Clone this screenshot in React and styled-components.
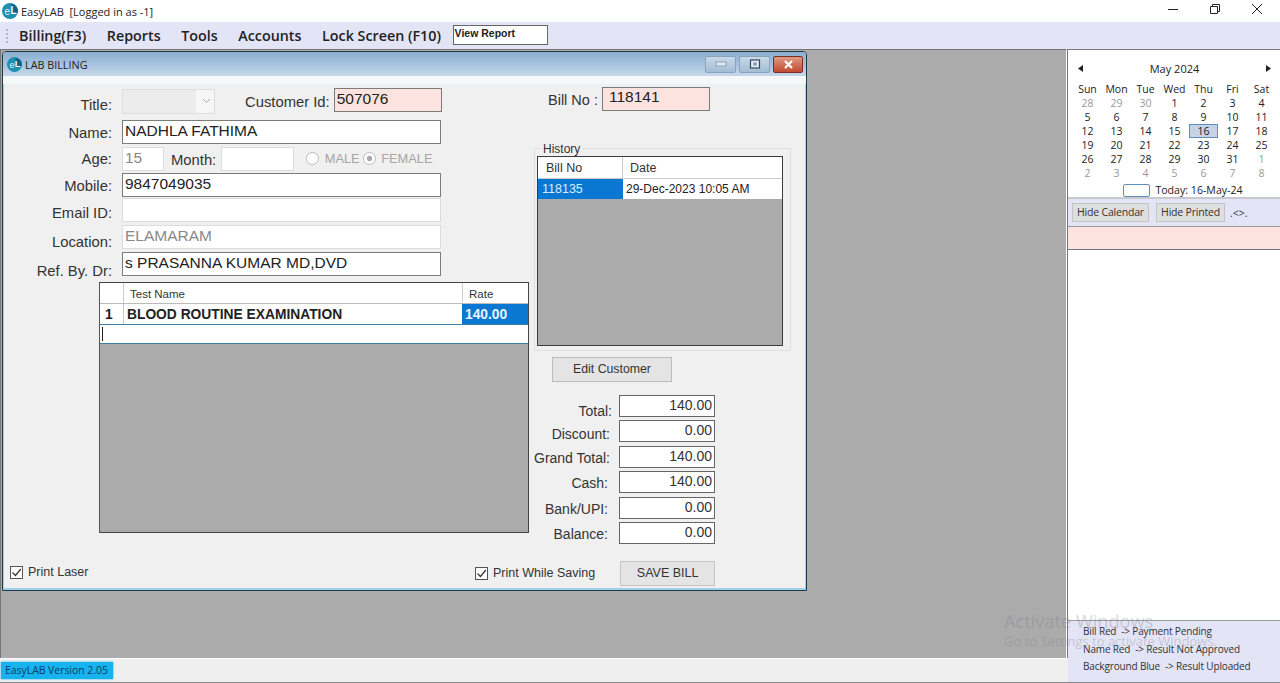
import styled, { createGlobalStyle } from "styled-components";

const GlobalStyle = createGlobalStyle`
  html, body { margin: 0; padding: 0; height: 100%; overflow: hidden; }
  body { font-family: "Liberation Sans", Arial, sans-serif; color: #222; }
  #root { height: 683px; }
`;

const calendarDays = [
  [[28, 1], [29, 1], [30, 1], [1], [2], [3], [4]],
  [[5], [6], [7], [8], [9], [10], [11]],
  [[12], [13], [14], [15], [16], [17], [18]],
  [[19], [20], [21], [22], [23], [24], [25]],
  [[26], [27], [28], [29], [30], [31], [1, 1]],
  [[2, 1], [3, 1], [4, 1], [5, 1], [6, 1], [7, 1], [8, 1]],
];

// label, value, right inset of the label, top padding of the label
const totals = [
  ["Total:", "140.00", 0, 10],
  ["Discount:", "0.00", 2, 6],
  ["Grand Total:", "140.00", 3, 2],
  ["Cash:", "140.00", 4, 2],
  ["Bank/UPI:", "0.00", 4, 2],
  ["Balance:", "0.00", 4, 3],
];

function Logo({ size }) {
  return (
    <svg width={size} height={size} viewBox="0 0 16 16">
      <circle cx="8" cy="8" r="8" fill="#1d8fb0" />
      <path d="M9 1 A7 7 0 0 1 15.5 10 L9 10 Z" fill="#0d5f86" />
      <text x="2.6" y="12" fontSize="10" fontFamily="Liberation Sans" fill="#dff3f7">e</text>
      <text x="8.4" y="10.5" fontSize="10" fontWeight="700" fontFamily="Liberation Sans" fill="#fff">L</text>
    </svg>
  );
}

function Check() {
  return (
    <CheckBox>
      <svg width="11" height="11" viewBox="0 0 11 11">
        <path d="M1.5 5.5 L4.5 8.5 L9.8 2" fill="none" stroke="#333" strokeWidth="1.2" />
      </svg>
    </CheckBox>
  );
}

export default function App() {
  return (
    <Page>
      <GlobalStyle />
      <TitleBar>
        <Logo size={16} />
        <AppTitle>EasyLAB&nbsp; [Logged in as -1]</AppTitle>
        <WinControls>
          <svg width="12" height="12" viewBox="0 0 12 12">
            <path d="M1 6.5 H11" stroke="#222" strokeWidth="1" />
          </svg>
          <svg width="12" height="12" viewBox="0 0 12 12">
            <path d="M1.5 3.5 H8.5 V10.5 H1.5 Z M3.5 3.5 V1.5 H10.5 V8.5 H8.5" fill="none" stroke="#222" strokeWidth="1" />
          </svg>
          <svg width="12" height="12" viewBox="0 0 12 12">
            <path d="M1 1 L11 11 M11 1 L1 11" stroke="#222" strokeWidth="1" />
          </svg>
        </WinControls>
      </TitleBar>

      <MenuBar>
        <Grip />
        <MenuItem>Billing(F3)</MenuItem>
        <MenuItem>Reports</MenuItem>
        <MenuItem>Tools</MenuItem>
        <MenuItem>Accounts</MenuItem>
        <MenuItem>Lock Screen (F10)</MenuItem>
        <ReportBox>View Report</ReportBox>
      </MenuBar>

      <Middle>
        <Desktop>
          <FormWindow>
            <WindowHead>
              <Logo size={15} />
              <WindowTitle>LAB BILLING</WindowTitle>
              <WindowButtons>
                <WindowButton>
                  <svg width="12" height="6" viewBox="0 0 12 6"><rect x="1" y="1" width="10" height="4" fill="#dfe7ef" stroke="#8296aa" strokeWidth="0.8" /></svg>
                </WindowButton>
                <WindowButton>
                  <svg width="12" height="10" viewBox="0 0 12 10"><rect x="1.5" y="1" width="9" height="8" fill="#e8eef5" stroke="#33495f" strokeWidth="1.2" /><rect x="4" y="3.4" width="4" height="3.2" fill="#8aa5be" /></svg>
                </WindowButton>
                <CloseButton>
                  <svg width="11" height="9" viewBox="0 0 11 9"><path d="M2 1 L9 8 M9 1 L2 8" stroke="#fff" strokeWidth="2.2" /></svg>
                </CloseButton>
              </WindowButtons>
            </WindowHead>

            <FormBody>
              <LeftColumn>
                <FieldRow $h={26} $mb={6}>
                  <Label $pt={7}>Title:</Label>
                  <ComboBox>
                    <svg width="9" height="6" viewBox="0 0 9 6"><path d="M1 1 L4.5 4.5 L8 1" fill="none" stroke="#aaa" strokeWidth="1" /></svg>
                  </ComboBox>
                  <InlineLabel $ml={30} $mr={4}>Customer Id:</InlineLabel>
                  <Input $w={108} $h={24} $bg="#fde3e0" $mt={-2}>507076</Input>
                </FieldRow>
                <FieldRow $h={24} $mb={2}>
                  <Label $pt={1}>Name:</Label>
                  <Input $w={319}>NADHLA FATHIMA</Input>
                </FieldRow>
                <FieldRow $h={25} $mb={2}>
                  <Label $pt={1}>Age:</Label>
                  <Input $w={42} $disabled>15</Input>
                  <InlineLabel $ml={7} $mr={5}>Month:</InlineLabel>
                  <Input $w={73} $disabled />
                  <RadioGroup>
                    <Radio /> MALE
                    <Radio $on /> FEMALE
                  </RadioGroup>
                </FieldRow>
                <FieldRow $h={24} $mb={1}>
                  <Label $pt={1}>Mobile:</Label>
                  <Input $w={319}>9847049035</Input>
                </FieldRow>
                <FieldRow $h={24} $mb={3}>
                  <Label $pt={5}>Email ID:</Label>
                  <Input $w={319} $disabled />
                </FieldRow>
                <FieldRow $h={24} $mb={2}>
                  <Label $pt={9}>Location:</Label>
                  <Input $w={319} $disabled $muted>ELAMARAM</Input>
                </FieldRow>
                <FieldRow $h={25} $mb={6}>
                  <Label $pt={15}>Ref. By. Dr:</Label>
                  <Input $w={319}>s PRASANNA KUMAR MD,DVD</Input>
                </FieldRow>

                <TestGrid>
                  <TestHead>
                    <NumCell />
                    <NameHead>Test Name</NameHead>
                    <RateHead>Rate</RateHead>
                  </TestHead>
                  <TestRow>
                    <NumCell>1</NumCell>
                    <NameCell>BLOOD ROUTINE EXAMINATION</NameCell>
                    <RateCell>140.00</RateCell>
                  </TestRow>
                  <EditRow><Caret /></EditRow>
                </TestGrid>

                <BottomLeft>
                  <Check />
                  <CheckText>Print Laser</CheckText>
                </BottomLeft>
              </LeftColumn>

              <RightColumn>
                <BillRow>
                  <BillLabel>Bill No :</BillLabel>
                  <BillInput>118141</BillInput>
                </BillRow>

                <HistoryGroup>
                  <HistoryLegend>History</HistoryLegend>
                  <HistoryGrid>
                    <HistoryHead>
                      <BillCol>Bill No</BillCol>
                      <DateCol>Date</DateCol>
                    </HistoryHead>
                    <HistoryRow>
                      <HistoryBill>118135</HistoryBill>
                      <HistoryDate>29-Dec-2023 10:05 AM</HistoryDate>
                    </HistoryRow>
                  </HistoryGrid>
                </HistoryGroup>

                <EditButton>Edit Customer</EditButton>

                <TotalsList>
                  {totals.map(([label, value, inset, top]) => (
                    <TotalRow key={label}>
                      <TotalLabel $inset={inset} $top={top}>{label}</TotalLabel>
                      <TotalValue>{value}</TotalValue>
                    </TotalRow>
                  ))}
                </TotalsList>

                <SaveRow>
                  <Check />
                  <CheckText>Print While Saving</CheckText>
                  <SaveButton>SAVE BILL</SaveButton>
                </SaveRow>
              </RightColumn>
            </FormBody>
          </FormWindow>
        </Desktop>

        <SidePanel>
          <Calendar>
            <CalHead>
              <svg width="5" height="7" viewBox="0 0 5 7"><path d="M5 0 V7 L0 3.5 Z" fill="#222" /></svg>
              <span>May 2024</span>
              <svg width="5" height="7" viewBox="0 0 5 7"><path d="M0 0 V7 L5 3.5 Z" fill="#222" /></svg>
            </CalHead>
            <CalGrid>
              {["Sun", "Mon", "Tue", "Wed", "Thu", "Fri", "Sat"].map((d) => (
                <DayName key={d}>{d}</DayName>
              ))}
              {calendarDays.flat().map(([n, other], i) => (
                <DayCell key={i} $other={other} $today={n === 16}>{n}</DayCell>
              ))}
            </CalGrid>
            <TodayRow>
              <TodayBox />
              <span>Today: 16-May-24</span>
            </TodayRow>
          </Calendar>
          <PanelButtons>
            <PanelButton $w={77}>Hide Calendar</PanelButton>
            <PanelButton $w={69}>Hide Printed</PanelButton>
            <Arrows>.&lt;&gt;.</Arrows>
          </PanelButtons>
          <PinkBar />
          <WhiteList />
          <Legend>
            <LegendLine>Bill Red&nbsp; -&gt; Payment Pending</LegendLine>
            <LegendLine>Name Red&nbsp; -&gt; Result Not Approved</LegendLine>
            <LegendLine>Background Blue&nbsp; -&gt; Result Uploaded</LegendLine>
          </Legend>
          <Watermark>
            <WatermarkTitle>Activate Windows</WatermarkTitle>
            <WatermarkText>Go to Settings to activate Windows.</WatermarkText>
          </Watermark>
        </SidePanel>
      </Middle>

      <StatusBar>
        <VersionTag>EasyLAB Version 2.05</VersionTag>
      </StatusBar>
    </Page>
  );
}

const Page = styled.div`
  width: 1280px;
  height: 683px;
  display: flex;
  flex-direction: column;
  background: #ababab;
  overflow: hidden;
`;

const TitleBar = styled.div`
  height: 22px;
  flex: none;
  display: flex;
  align-items: center;
  padding-left: 2px;
  background: #fff;
`;

const AppTitle = styled.span`
  margin-left: 3px;
  font: 11px "Open Sans", sans-serif;
  color: #222;
  white-space: nowrap;
`;

const WinControls = styled.div`
  margin-left: auto;
  display: flex;
  gap: 30px;
  padding-right: 17px;
  margin-top: -4px;
`;

const MenuBar = styled.div`
  height: 27px;
  flex: none;
  display: flex;
  align-items: center;
  background: #e3e4f6;
  padding-left: 6px;
`;

const Grip = styled.div`
  width: 1px;
  height: 14px;
  margin-right: 10px;
  border-left: 2px dotted #b5b5c5;
`;

const MenuItem = styled.span`
  font: 600 14.3px "Open Sans", sans-serif;
  color: #222;
  margin-right: 20.6px;
  white-space: nowrap;
`;

const ReportBox = styled.div`
  width: 92px;
  height: 18px;
  margin-left: -9px;
  margin-top: -2px;
  padding-left: 1px;
  background: #fff;
  border: 1px solid #666;
  font: 700 10.5px/15px "Liberation Sans", sans-serif;
  color: #222;
`;

const Middle = styled.div`
  flex: 1;
  display: flex;
  min-height: 0;
  position: relative;
`;

const Desktop = styled.div`
  width: 1067px;
  flex: none;
  padding: 1px 0 0 2px;
  box-sizing: border-box;
  background: #ababab;
  border-top: 1px solid #777;
  border-left: 1px solid #777;
  border-right: 1px solid #fff;
`;

const FormWindow = styled.div`
  width: 805px;
  height: 540px;
  margin-left: -1px;
  box-sizing: border-box;
  display: flex;
  flex-direction: column;
  background: #f0f0f0;
  border: 1px solid #1c3a48;
  border-radius: 4px 4px 0 0;
  box-shadow: inset 0 0 0 1px #9fd0e8, inset 0 -2px 0 #9fd0e8;
`;

const WindowHead = styled.div`
  height: 24px;
  flex: none;
  display: flex;
  align-items: center;
  padding: 0 3px 0 4px;
  background: linear-gradient(180deg, #8bafd0 0%, #a9c4de 55%, #c6d8ea 100%);
  border-radius: 3px 3px 0 0;
`;

const WindowTitle = styled.span`
  margin-left: 3px;
  font: 10.8px "Open Sans", sans-serif;
  color: #222;
`;

const WindowButtons = styled.div`
  margin-left: auto;
  display: flex;
  gap: 3px;
`;

const WindowButton = styled.div`
  width: 29px;
  height: 15px;
  display: flex;
  align-items: center;
  justify-content: center;
  border: 1px solid #8aa3bb;
  border-radius: 2px;
  background: linear-gradient(180deg, #c8d9e9, #a3bdd5);
`;

const CloseButton = styled(WindowButton)`
  width: 28px;
  border-color: #7c2d20;
  background: linear-gradient(180deg, #e09a85, #c14a30);
`;

const FormBody = styled.div`
  flex: 1;
  display: flex;
  min-height: 0;
  padding: 4px 0 0 1px;
  border-top: 8px solid #f6f7f9;
`;

const LeftColumn = styled.div`
  width: 530px;
  flex: none;
  display: flex;
  flex-direction: column;
`;

const FieldRow = styled.div`
  height: ${(p) => p.$h}px;
  margin-bottom: ${(p) => p.$mb}px;
  display: flex;
  align-items: center;
`;

const Label = styled.div`
  width: 108px;
  flex: none;
  margin-right: 10px;
  text-align: right;
  font-size: 14.8px;
  color: #333;
  padding-top: ${(p) => p.$pt}px;
`;

const InlineLabel = styled.div`
  margin-left: ${(p) => p.$ml}px;
  margin-right: ${(p) => p.$mr}px;
  font-size: 14.8px;
  color: #333;
  white-space: nowrap;
  padding-top: 2px;
`;

const Input = styled.div`
  width: ${(p) => p.$w}px;
  height: ${(p) => p.$h || 24}px;
  margin-top: ${(p) => p.$mt || 0}px;
  flex: none;
  box-sizing: border-box;
  padding: 0 2px;
  background: ${(p) => p.$bg || "#fff"};
  border: 1px solid ${(p) => (p.$disabled ? "#dcdcdc" : "#7c7c7c")};
  font-size: 15.5px;
  line-height: 20px;
  color: ${(p) => (p.$muted || p.$disabled ? "#888" : "#222")};
  white-space: nowrap;
`;

const BillInput = styled(Input).attrs({ $w: 108, $h: 24, $bg: "#fde3e0" })`
  margin-top: -2px;
  padding-left: 6px;
  line-height: 18px;
`;

const ComboBox = styled.div`
  width: 93px;
  height: 25px;
  flex: none;
  box-sizing: border-box;
  display: flex;
  align-items: center;
  justify-content: flex-end;
  padding-right: 3px;
  background: linear-gradient(90deg, #ececec 80%, #f6f6f6 80%);
  border: 1px solid #dedede;
`;

const RadioGroup = styled.div`
  display: flex;
  align-items: center;
  margin-left: 12px;
  font-size: 12.8px;
  color: #a6a6a6;
  white-space: pre;
`;

const Radio = styled.span`
  width: 11px;
  height: 11px;
  margin: 0 2px 0 ${(p) => (p.$on ? 3 : 0)}px;
  border: 1px solid #bdbdbd;
  border-radius: 50%;
  background: ${(p) => (p.$on ? "radial-gradient(circle, #aaa 0 2.5px, #fff 3px)" : "#fff")};
`;

const TestGrid = styled.div`
  width: 430px;
  height: 251px;
  margin-left: 95px;
  flex: none;
  box-sizing: border-box;
  background: #ababab;
  border: 1px solid #444;
  border-left-color: #555;
`;

const TestHead = styled.div`
  height: 20px;
  display: flex;
  background: #fff;
  border-bottom: 1px solid #bbb;
  font-size: 11.5px;
  line-height: 22px;
  color: #333;
`;

const NumCell = styled.div`
  width: 24px;
  flex: none;
  padding-left: 5px;
  box-sizing: border-box;
  border-right: 1px solid #ccc;
`;

const NameHead = styled.div`
  flex: 1;
  padding-left: 6px;
`;

const RateHead = styled.div`
  width: 66px;
  flex: none;
  padding-left: 6px;
  box-sizing: border-box;
  border-left: 1px solid #ccc;
`;

const TestRow = styled.div`
  height: 20px;
  display: flex;
  background: #fff;
  font-size: 13.8px;
  font-weight: 700;
  line-height: 21px;
  color: #222;
`;

const NameCell = styled.div`
  flex: 1;
  padding-left: 3px;
`;

const RateCell = styled.div`
  width: 66px;
  flex: none;
  padding-left: 3px;
  box-sizing: border-box;
  background: #0a78d2;
  color: #e8f6ff;
`;

const EditRow = styled.div`
  height: 20px;
  box-sizing: border-box;
  padding: 2px 0 0 2px;
  background: #fff;
  border-top: 1px solid #3d7fa8;
  border-bottom: 1px solid #3d7fa8;
`;

const Caret = styled.div`
  width: 1px;
  height: 14px;
  background: #222;
`;

const BottomLeft = styled.div`
  display: flex;
  align-items: center;
  margin: 32px 0 0 6px;
`;

const CheckBox = styled.span`
  width: 11px;
  height: 11px;
  flex: none;
  display: flex;
  align-items: center;
  justify-content: center;
  background: #fff;
  border: 1px solid #555;
`;

const CheckText = styled.span`
  margin-left: 5px;
  font-size: 12.5px;
  color: #333;
  white-space: nowrap;
`;

const RightColumn = styled.div`
  flex: 1;
  display: flex;
  flex-direction: column;
  min-width: 0;
`;

const BillRow = styled.div`
  height: 24px;
  display: flex;
  align-items: center;
  padding-left: 14px;
`;

const BillLabel = styled.span`
  width: 54px;
  font-size: 14.5px;
  color: #333;
  white-space: nowrap;
`;

const HistoryGroup = styled.div`
  position: relative;
  width: 257px;
  height: 203px;
  margin-top: 36px;
  box-sizing: border-box;
  padding: 7px 7px 0 2px;
  border: 1px solid #dfdfdf;
`;

const HistoryLegend = styled.span`
  position: absolute;
  top: -6px;
  left: 6px;
  padding: 0 2px;
  font-size: 12px;
  line-height: 13px;
  background: #f0f0f0;
  color: #333;
`;

const HistoryGrid = styled.div`
  height: 190px;
  box-sizing: border-box;
  background: #ababab;
  border: 1px solid #3c3c3c;
`;

const HistoryHead = styled.div`
  height: 21px;
  display: flex;
  background: #fff;
  border-bottom: 1px solid #ccc;
  font-size: 12.5px;
  line-height: 23px;
  color: #333;
`;

const BillCol = styled.div`
  width: 85px;
  flex: none;
  box-sizing: border-box;
  padding-left: 8px;
  border-right: 1px solid #ccc;
`;

const DateCol = styled.div`
  padding-left: 7px;
`;

const HistoryRow = styled.div`
  height: 20px;
  display: flex;
  background: #fff;
  font-size: 12px;
  line-height: 21px;
  color: #222;
`;

const HistoryBill = styled.div`
  width: 85px;
  flex: none;
  box-sizing: border-box;
  padding-left: 4px;
  font-size: 12.5px;
  background: #0a78d2;
  color: #d8f0ff;
`;

const HistoryDate = styled.div`
  padding-left: 3px;
  white-space: nowrap;
`;

const EditButton = styled.div`
  width: 120px;
  height: 25px;
  margin: 6px 0 0 18px;
  box-sizing: border-box;
  text-align: center;
  font-size: 12.3px;
  line-height: 22px;
  color: #333;
  background: #e4e4e4;
  border: 1px solid #bdbdbd;
`;

const TotalsList = styled.div`
  margin-top: 13px;
  display: flex;
  flex-direction: column;
  gap: 3.4px;
`;

const TotalRow = styled.div`
  height: 22px;
  display: flex;
  align-items: center;
`;

const TotalLabel = styled.div`
  width: 85px;
  flex: none;
  box-sizing: border-box;
  padding-right: ${(p) => 7 + p.$inset}px;
  padding-top: ${(p) => p.$top}px;
  text-align: right;
  font-size: 14px;
  color: #333;
  white-space: nowrap;
`;

const TotalValue = styled.div`
  width: 96px;
  height: 22px;
  box-sizing: border-box;
  padding-right: 2px;
  text-align: right;
  font-size: 14px;
  line-height: 19px;
  color: #333;
  background: #fff;
  border: 1px solid #666;
`;

const SaveRow = styled.div`
  display: flex;
  align-items: center;
  margin: 17px 0 0 -59px;
`;

const SaveButton = styled.div`
  width: 95px;
  height: 25px;
  margin-left: 25px;
  box-sizing: border-box;
  text-align: center;
  font-size: 12.5px;
  line-height: 23px;
  color: #333;
  background: #e4e4e4;
  border: 1px solid #c4c4c4;
`;

const SidePanel = styled.div`
  flex: 1;
  display: flex;
  flex-direction: column;
  position: relative;
  background: #fff;
  border-top: 1px solid #777;
  border-left: 1px solid #777;
`;

const Calendar = styled.div`
  height: 149px;
  flex: none;
  box-sizing: border-box;
  padding: 11px 4px 0 5px;
  font: 11px "Open Sans", sans-serif;
  color: #222;
  background: #fff;
  border-bottom: 2px solid #c8c8d0;
`;

const CalHead = styled.div`
  display: flex;
  justify-content: space-between;
  align-items: center;
  padding: 0 5px 0 5px;
  height: 14px;
`;

const CalGrid = styled.div`
  display: grid;
  grid-template-columns: repeat(7, 29px);
  grid-auto-rows: 14px;
  margin-top: 7px;
  font-size: 10.5px;
  line-height: 14px;
`;

const DayName = styled.div`
  text-align: center;
`;

const DayCell = styled.div`
  text-align: center;
  color: ${(p) => (p.$other ? "#999" : "#222")};
  background: ${(p) => (p.$today ? "#c5d3e4" : "transparent")};
  box-shadow: ${(p) => (p.$today ? "inset 0 0 0 1px #5f8fbd" : "none")};
`;

const TodayRow = styled.div`
  display: flex;
  align-items: center;
  justify-content: center;
  gap: 5px;
  margin-top: 3px;
  font-size: 10.6px;
  padding-left: 17px;
`;

const TodayBox = styled.div`
  width: 25px;
  height: 11px;
  border: 1px solid #5f8fbd;
  border-radius: 2px;
`;

const PanelButtons = styled.div`
  height: 27px;
  flex: none;
  display: flex;
  align-items: center;
  gap: 7px;
  padding-left: 4px;
  background: #e3e4f6;
`;

const PanelButton = styled.div`
  width: ${(p) => p.$w}px;
  height: 19px;
  box-sizing: border-box;
  text-align: center;
  font: 10.5px/17px "Open Sans", sans-serif;
  letter-spacing: -0.2px;
  white-space: nowrap;
  color: #333;
  background: #dfdfdf;
  border: 1px solid #c4c4c4;
`;

const Arrows = styled.span`
  font: 10.5px "Open Sans", sans-serif;
  color: #333;
  margin-left: -2px;
`;

const PinkBar = styled.div`
  height: 22px;
  flex: none;
  background: #fde3e0;
  border-top: 1px solid #999;
  border-bottom: 1px solid #777;
`;

const WhiteList = styled.div`
  flex: 1;
  background: #fff;
`;

const Legend = styled.div`
  height: 62px;
  flex: none;
  box-sizing: border-box;
  padding: 2px 0 0 15px;
  background: #e3e4f6;
  border-top: 1px solid #999;
  margin-bottom: -24px;
  z-index: 1;
`;

const LegendLine = styled.div`
  font: 10px/17.6px "Open Sans", sans-serif;
  letter-spacing: -0.15px;
  color: #333;
  white-space: nowrap;
`;

const Watermark = styled.div`
  position: absolute;
  left: -64px;
  top: 559px;
  z-index: 2;
  color: rgba(120, 120, 130, 0.3);
  font-family: "Open Sans", sans-serif;
  white-space: nowrap;
  pointer-events: none;
`;

const WatermarkTitle = styled.div`
  font-size: 18.2px;
  line-height: 24px;
`;

const WatermarkText = styled.div`
  font-size: 13px;
  line-height: 17px;
`;

const StatusBar = styled.div`
  height: 25px;
  flex: none;
  display: flex;
  align-items: center;
  background: #efefef;
  border-top: 1px solid #fff;
  border-bottom: 1px solid #888;
  box-sizing: border-box;
`;

const VersionTag = styled.div`
  margin-left: 1px;
  height: 17px;
  padding: 0 5px 0 4px;
  font: 10.4px/17px "Open Sans", sans-serif;
  color: #0b3a66;
  background: #17b3ee;
  box-shadow: 0 0 2px #17b3ee;
`;
